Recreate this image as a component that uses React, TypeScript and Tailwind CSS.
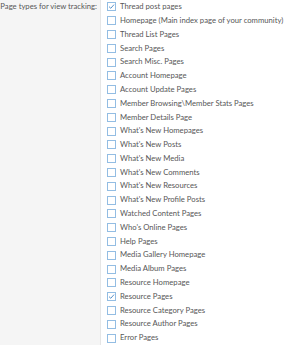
const items: [string, boolean][] = [
  ["Thread post pages", true],
  ["Homepage (Main index page of your community)", false],
  ["Thread List Pages", false],
  ["Search Pages", false],
  ["Search Misc. Pages", false],
  ["Account Homepage", false],
  ["Account Update Pages", false],
  ["Member Browsing\\Member Stats Pages", false],
  ["Member Details Page", false],
  ["What's New Homepages", false],
  ["What's New Posts", false],
  ["What's New Media", false],
  ["What's New Comments", false],
  ["What's New Resources", false],
  ["What's New Profile Posts", false],
  ["Watched Content Pages", false],
  ["Who's Online Pages", false],
  ["Help Pages", false],
  ["Media Gallery Homepage", false],
  ["Media Album Pages", false],
  ["Resource Homepage", false],
  ["Resource Pages", true],
  ["Resource Category Pages", false],
  ["Resource Author Pages", false],
  ["Error Pages", false],
];

function Box({ checked }: { checked: boolean }) {
  return (
    <span className="w-[9px] h-[9px] border border-[#93bde3] bg-white flex items-center justify-center shrink-0">
      {checked && (
        <svg width="7" height="7" viewBox="0 0 7 7">
          <path d="M1 3.6 L2.8 5.3 L6 1.6" fill="none" stroke="#5b93cc" strokeWidth="1" />
        </svg>
      )}
    </span>
  );
}

export default function App() {
  return (
    <div className="w-[300px] h-[345px] flex bg-white text-[#575757] text-[7.7px] overflow-hidden" style={{ fontFamily: 'Lato, "Noto Sans", sans-serif' }}>
      <div className="w-[101px] bg-[#f5f5f5] border-r border-[#e6e6e6] shrink-0">
        <div className="h-[13.8px] flex items-center justify-end pr-[3px] whitespace-nowrap">Page types for view tracking:</div>
      </div>
      <div className="flex-1 pl-[6px]">
        {items.map(([label, c]) => (
          <div key={label} className="h-[13.8px] flex items-center gap-[4px]">
            <Box checked={c} />
            <span className="whitespace-nowrap">{label}</span>
          </div>
        ))}
      </div>
    </div>
  );
}
